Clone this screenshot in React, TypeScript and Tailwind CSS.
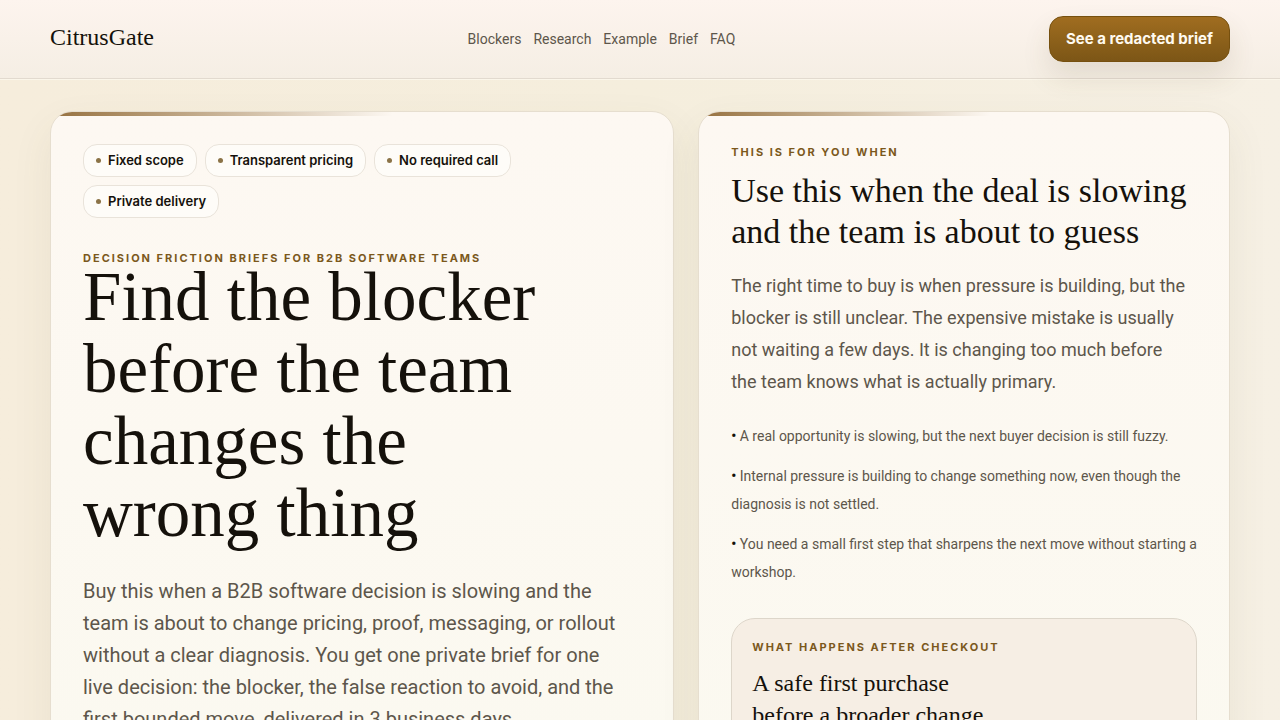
import type { ReactNode } from "react";

const navLinks = [
  { label: "Blockers", href: "#blockers" },
  { label: "Research", href: "#research" },
  { label: "Example", href: "#example" },
  { label: "Brief", href: "#brief" },
  { label: "FAQ", href: "#faq" },
];

const badges = [
  "Fixed scope",
  "Transparent pricing",
  "No required call",
  "Private delivery",
];

const signals = [
  "A real opportunity is slowing, but the next buyer decision is still fuzzy.",
  "Internal pressure is building to change something now, even though the diagnosis is not settled.",
  "You need a small first step that sharpens the next move without starting a workshop.",
];

const Header = () => {
  return (
    <header className="border-b border-[#e2dacf] bg-linear-to-b from-[#fdf4ee] to-[#f5eee4] shadow-[0_1px_0_#fbf6ea]">
      <div className="mx-auto flex max-w-[1180px] items-center justify-between py-4">
        <a
          href="#top"
          className="pb-1 font-['Liberation_Serif',serif] text-2xl text-[#15110b]"
        >
          CitrusGate
        </a>
        <nav className="flex gap-3 text-sm text-[#5d564b]">
          {navLinks.map((link) => (
            <a key={link.label} href={link.href} className="hover:text-black">
              {link.label}
            </a>
          ))}
        </nav>
        <button
          type="button"
          className="h-[46px] rounded-[14px] border border-[#76500f] bg-linear-to-b from-[#a06d20] to-[#7c5616] px-4 font-[Inter,sans-serif] text-[15px] font-bold text-[#fffaf0] shadow-[0_14px_28px_rgba(90,75,40,0.12)]"
        >
          See a redacted brief
        </button>
      </div>
    </header>
  );
};

const Panel = ({ children }: { children: ReactNode }) => {
  return (
    <section className="relative overflow-hidden rounded-[22px] border border-[#e6decf] bg-linear-to-b from-[#fdf8f2] to-[#fbf9f0] p-8 shadow-[0_16px_40px_rgba(90,85,50,0.08)]">
      <div className="absolute inset-x-0 top-0 h-1 bg-linear-to-r from-[#96713f] to-transparent to-55%" />
      {children}
    </section>
  );
};

const Eyebrow = ({ children }: { children: ReactNode }) => {
  return (
    <p className="font-[Inter,sans-serif] text-[11px] leading-4 font-bold tracking-[2px] text-[#7b581c] uppercase">
      {children}
    </p>
  );
};

const Hero = () => {
  return (
    <Panel>
      <ul className="mb-8 flex flex-wrap gap-2">
        {badges.map((badge) => (
          <li
            key={badge}
            className="flex h-[33px] items-center gap-[7px] rounded-[14px] border border-[#e9e3da] bg-[#fefcf8] px-3 font-[Inter,sans-serif] text-[13px] font-semibold text-[#15110b]"
          >
            <span className="size-[5px] rounded-full bg-[#8b7347]" />
            {badge}
          </li>
        ))}
      </ul>
      <Eyebrow>Decision friction briefs for B2B software teams</Eyebrow>
      <h1 className="-mt-[5px] max-w-[480px] font-['Liberation_Serif',serif] text-[69px] leading-[72px] text-[#15110b]">
        Find the blocker before the team changes the wrong thing
      </h1>
      <p className="mt-[26px] max-w-[550px] text-xl leading-8 text-[#5d564b]">
        Buy this when a B2B software decision is slowing and the team is about
        to change pricing, proof, messaging, or rollout without a clear
        diagnosis. You get one private brief for one live decision: the blocker,
        the false reaction to avoid, and the first bounded move, delivered in 3
        business days.
      </p>
    </Panel>
  );
};

const Fit = () => {
  return (
    <Panel>
      <Eyebrow>This is for you when</Eyebrow>
      <h2 className="mt-[10px] font-['Liberation_Serif',serif] text-[34px] leading-[41px] text-[#15110b]">
        Use this when the deal is slowing and the team is about to guess
      </h2>
      <p className="mt-[18px] max-w-[456px] text-lg leading-8 text-[#5d564b]">
        The right time to buy is when pressure is building, but the blocker is
        still unclear. The expensive mistake is usually not waiting a few days.
        It is changing too much before the team knows what is actually primary.
      </p>
      <ul className="mt-6 flex flex-col gap-3 text-sm leading-7 text-[#5d564b]">
        {signals.map((signal) => (
          <li key={signal}>
            <span className="font-bold text-[#15110b]">•</span> {signal}
          </li>
        ))}
      </ul>
      <div className="mt-8 rounded-3xl border border-[#ddd6ca] bg-[#f6eee4] p-5">
        <Eyebrow>What happens after checkout</Eyebrow>
        <h3 className="mt-3 max-w-[240px] font-['Liberation_Serif',serif] text-2xl leading-8 text-[#15110b]">
          A safe first purchase before a broader change
        </h3>
      </div>
    </Panel>
  );
};

const App = () => {
  return (
    <div
      id="top"
      className="min-h-screen bg-linear-to-r from-[#f6eddc] via-[#f5eedd] to-[#f6f0e4] font-[Roboto,sans-serif]"
    >
      <Header />
      <main className="mx-auto grid max-w-[1180px] grid-cols-[1.08fr_0.92fr] gap-6 py-8">
        <Hero />
        <Fit />
      </main>
    </div>
  );
};

export default App;
